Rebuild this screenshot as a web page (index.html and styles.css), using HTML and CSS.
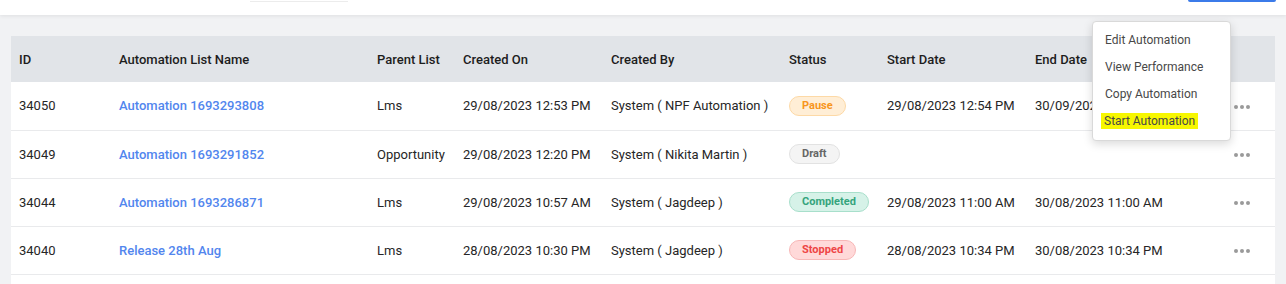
FILE: index.html
```html
<!DOCTYPE html>
<html lang="en">
<head>
    <meta charset="UTF-8">
    <title>Automations</title>
    <link rel="stylesheet" href="styles.css">
</head>
<body>
    <div class="topbar">
        <div class="search-box"></div>
        <div class="topbar-btn"></div>
    </div>

    <div class="content">
        <div class="table-card">
            <table class="auto-table">
                <colgroup>
                    <col style="width:100px">
                    <col style="width:258px">
                    <col style="width:86px">
                    <col style="width:148px">
                    <col style="width:178px">
                    <col style="width:98px">
                    <col style="width:148px">
                    <col style="width:199px">
                    <col>
                </colgroup>
                <thead>
                    <tr>
                        <th>ID</th>
                        <th>Automation List Name</th>
                        <th>Parent List</th>
                        <th>Created On</th>
                        <th>Created By</th>
                        <th>Status</th>
                        <th>Start Date</th>
                        <th>End Date</th>
                        <th></th>
                    </tr>
                </thead>
                <tbody>
                    <tr>
                        <td>34050</td>
                        <td><a href="#" class="list-link">Automation 1693293808</a></td>
                        <td>Lms</td>
                        <td>29/08/2023 12:53 PM</td>
                        <td>System ( NPF Automation )</td>
                        <td><span class="badge badge-pause">Pause</span></td>
                        <td>29/08/2023 12:54 PM</td>
                        <td>30/09/2023 12:54 PM</td>
                        <td><span class="dots"><i></i><i></i><i></i></span></td>
                    </tr>
                    <tr>
                        <td>34049</td>
                        <td><a href="#" class="list-link">Automation 1693291852</a></td>
                        <td>Opportunity</td>
                        <td>29/08/2023 12:20 PM</td>
                        <td>System ( Nikita Martin )</td>
                        <td><span class="badge badge-draft">Draft</span></td>
                        <td></td>
                        <td></td>
                        <td><span class="dots"><i></i><i></i><i></i></span></td>
                    </tr>
                    <tr>
                        <td>34044</td>
                        <td><a href="#" class="list-link">Automation 1693286871</a></td>
                        <td>Lms</td>
                        <td>29/08/2023 10:57 AM</td>
                        <td>System ( Jagdeep )</td>
                        <td><span class="badge badge-completed">Completed</span></td>
                        <td>29/08/2023 11:00 AM</td>
                        <td>30/08/2023 11:00 AM</td>
                        <td><span class="dots"><i></i><i></i><i></i></span></td>
                    </tr>
                    <tr>
                        <td>34040</td>
                        <td><a href="#" class="list-link">Release 28th Aug</a></td>
                        <td>Lms</td>
                        <td>28/08/2023 10:30 PM</td>
                        <td>System ( Jagdeep )</td>
                        <td><span class="badge badge-stopped">Stopped</span></td>
                        <td>28/08/2023 10:34 PM</td>
                        <td>30/08/2023 10:34 PM</td>
                        <td><span class="dots"><i></i><i></i><i></i></span></td>
                    </tr>
                </tbody>
            </table>
        </div>

        <!-- row actions menu (open for 34050) -->
        <ul class="action-menu">
            <li>Edit Automation</li>
            <li>View Performance</li>
            <li>Copy Automation</li>
            <li><span class="highlight">Start Automation</span></li>
        </ul>
    </div>
</body>
</html>
```

FILE: styles.css
```css
:root {
    --page-bg: #f1f2f4;
    --head-bg: #e1e4e8;
    --text-color: #222;
    --link-color: #5286ee;
    --line-color: #e9eaec;
}

* {
    box-sizing: border-box;
}

body {
    margin: 0;
    font-family: Roboto, "Liberation Sans", Arial, sans-serif;
    font-size: 13px;
    color: var(--text-color);
    background-color: var(--page-bg);
    overflow: hidden;
}

.topbar {
    height: 15px;
    background-color: white;
    box-shadow: 0 1px 4px rgba(0, 0, 0, 0.08);
    display: flex;
    align-items: flex-start;
    position: relative;
    z-index: 1;
}

.search-box {
    width: 98px;
    height: 2px;
    margin-left: 250px;
    border-bottom: 1px solid #ececec;
}

.topbar-btn {
    width: 88px;
    height: 2px;
    margin-left: auto;
    margin-right: 10px;
    background-color: #3b7be9;
    border-radius: 0 0 3px 3px;
}

.content {
    position: relative;
    padding: 21px 11px 0;
}

.table-card {
    background-color: white;
    padding-bottom: 10px;
}

.auto-table {
    width: 100%;
    border-collapse: collapse;
    table-layout: fixed;
}

.auto-table th {
    background-color: var(--head-bg);
    height: 46px;
    padding: 0 8px;
    text-align: left;
    font-weight: 500;
    color: #1d1d1d;
    white-space: nowrap;
}

.auto-table td {
    height: 48px;
    padding: 0 8px;
    border-bottom: 1px solid var(--line-color);
    white-space: nowrap;
    color: #262626;
}

.list-link {
    color: var(--link-color);
    font-weight: 500;
    text-decoration: none;
}

.badge {
    display: inline-block;
    height: 20px;
    line-height: 18px;
    padding: 0 12px;
    border-radius: 10px;
    border: 1px solid;
    font-size: 11px;
    font-weight: 700;
}

.badge-pause {
    background-color: #ffeed6;
    border-color: #fdd9a6;
    color: #f7951d;
}

.badge-draft {
    background-color: #f4f4f4;
    border-color: #e2e2e2;
    color: #666;
}

.badge-completed {
    background-color: #d6f2e8;
    border-color: #a8dfcb;
    color: #35a47c;
}

.badge-stopped {
    background-color: #ffd9d9;
    border-color: #f7b7b7;
    color: #ee4545;
}

.dots {
    display: inline-flex;
    gap: 2px;
    vertical-align: middle;
}

.dots i {
    width: 4px;
    height: 4px;
    border-radius: 50%;
    background-color: #9a9a9a;
}

.action-menu {
    position: absolute;
    top: 6px;
    left: 1092px;
    width: 139px;
    margin: 0;
    padding: 8px 0 2px;
    list-style: none;
    background-color: white;
    border: 1px solid #d9d9d9;
    border-radius: 4px;
    box-shadow: 0 3px 10px rgba(0, 0, 0, 0.15);
}

.action-menu li {
    height: 27px;
    line-height: 20px;
    padding: 0 12px;
    font-size: 12px;
    color: #484848;
    white-space: nowrap;
}

.highlight {
    background-color: #f7f700;
    padding: 1px 3px;
    margin-left: -4px;
}
```
